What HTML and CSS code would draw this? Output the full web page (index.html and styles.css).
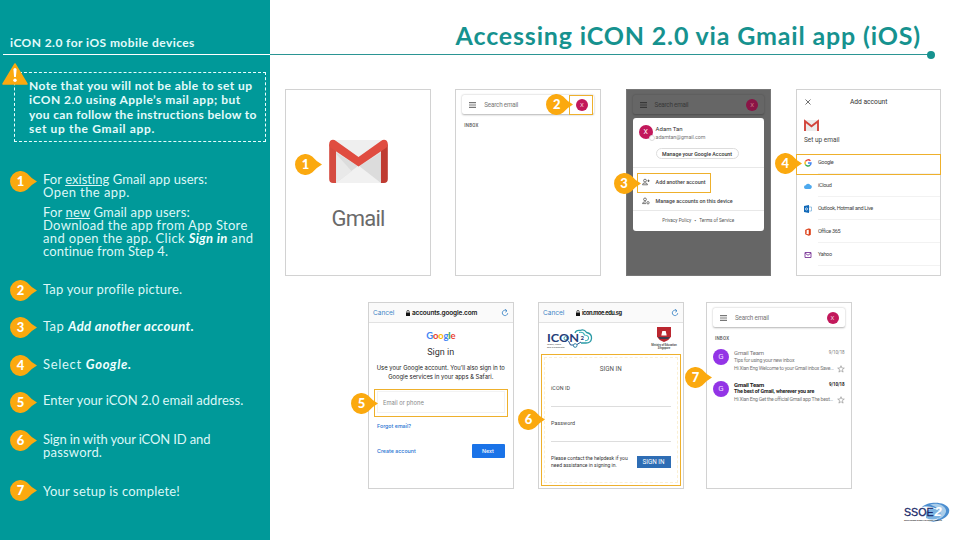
FILE: index.html
```html
<!DOCTYPE html>
<html lang="en">
<head>
<meta charset="utf-8">
<title>Accessing iCON 2.0 via Gmail app (iOS)</title>
<link rel="stylesheet" href="styles.css">
</head>
<body>
<svg class="defs" width="0" height="0">
  <symbol id="pin" viewBox="0 0 27 21"><path d="M17.200 2.400Q21.500 7.500 27 10.500Q21.500 13.500 17.200 18.600A10.500 10.500 0 1 1 17.200 2.400Z" fill="#fba90f"/></symbol>
  <symbol id="menu" viewBox="0 0 7 6"><path d="M0 .7h7M0 3h7M0 5.300h7" stroke="currentColor" stroke-width="1.200"/></symbol>
  <symbol id="reload" viewBox="0 0 8 8"><path d="M5.600 1.700A2.700 2.700 0 1 0 6.700 4.200M4.200 .3L6 1.800L4.300 3.200" fill="none" stroke="#3d86c6" stroke-width=".9"/></symbol>
  <symbol id="lock" viewBox="0 0 4 6"><path d="M0 2.600h4V6H0z" fill="#111"/><path d="M.9 2.800V1.500a1.100 1.100 0 0 1 2.200 0v1.300" fill="none" stroke="#111" stroke-width=".7"/></symbol>
  <symbol id="star" viewBox="0 0 8 8"><path d="M4 .7l.9 2.300 2.400.1-1.900 1.500.7 2.500L4 5.700 1.900 7.100l.7-2.500L.7 3.100l2.400-.1z" fill="none" stroke="#888" stroke-width=".6"/></symbol>
</svg>

<div class="slide">
  <aside class="sidebar">
    <h2>iCON 2.0 for iOS mobile devices</h2>
    <div class="note">
      <svg class="warn" viewBox="0 0 26 22"><path d="M13 1L25 21H1Z" fill="#fba90f" stroke="#fba90f" stroke-width="1.500" stroke-linejoin="round"/><path d="M11.400 6.500a1.600 1.600 0 0 1 3.200 0L13.900 14h-1.800z" fill="#fff"/><circle cx="13" cy="17.300" r="1.700" fill="#fff"/></svg>
      <span class="n1">Note that you will not be able to set up</span>
      <span class="n2">iCON 2.0 using Apple’s mail app; but</span>
      <span class="n3">you can follow the instructions below to</span>
      <span class="n4">set up the Gmail app.</span>
    </div>
    <ol class="steps">
      <li><div class="pin"><svg><use href="#pin"/></svg><b>1</b></div>
        <div class="txt"><p><span class="s1">For <u>existing</u> Gmail app users:</span><span class="s2">Open the app.</span></p>
        <p><span class="s3">For <u>new</u> Gmail app users:</span><span class="s4">Download the app from App Store</span><span class="s5">and open the app. Click <em>Sign in</em> and</span><span class="s6">continue from Step 4.</span></p></div></li>
      <li><div class="pin"><svg><use href="#pin"/></svg><b>2</b></div><div class="txt mid"><span class="s7">Tap your profile picture.</span></div></li>
      <li><div class="pin"><svg><use href="#pin"/></svg><b>3</b></div><div class="txt mid"><span class="s8">Tap <em>Add another account.</em></span></div></li>
      <li><div class="pin"><svg><use href="#pin"/></svg><b>4</b></div><div class="txt mid"><span class="s9">Select <em>Google.</em></span></div></li>
      <li><div class="pin"><svg><use href="#pin"/></svg><b>5</b></div><div class="txt"><span class="s10">Enter your iCON 2.0 email address.</span></div></li>
      <li><div class="pin"><svg><use href="#pin"/></svg><b>6</b></div><div class="txt mid"><span class="s11">Sign in with your iCON ID and</span><span class="s12">password.</span></div></li>
      <li><div class="pin"><svg><use href="#pin"/></svg><b>7</b></div><div class="txt low"><span class="s13">Your setup is complete!</span></div></li>
    </ol>
  </aside>

  <main class="main">
    <header><h1>Accessing iCON 2.0 via Gmail app (iOS)</h1></header>

    <section class="row top">
      <article class="phone splash">
        <svg class="gmail" viewBox="0 0 60 44">
          <path d="M3 0h54v44H3z" fill="#e6e6e6"/><path d="M7 44V13l23 14 23-14v31z" fill="#dcdcdc"/><path d="M7 44l23-18 23 18z" fill="#f1f1f1"/><path d="M7 14l16 18L7 44z" fill="#e9e9e9"/><path d="M5 0h50L30 18z" fill="#efefef"/>
          <path d="M0 4v36q0 4 4 4h3V11z" fill="#d54b40"/><path d="M60 4v36q0 4-4 4h-3V11z" fill="#bf3b31"/>
          <path d="M0 4C0 0 4-1.500 7 1L30 17.500 53 1c3-2.500 7-1 7 3 0 2-.6 3.200-2 4.300L30 27 2 8.300C.6 7.200 0 6 0 4z" fill="#e04c40"/>
        </svg>
        <div class="brand">Gmail</div>
        <div class="pin over p1"><svg><use href="#pin"/></svg><b>1</b></div>
      </article>

      <article class="phone">
        <div class="search"><svg class="menu"><use href="#menu"/></svg><span class="grow">Search email</span><i class="user">X</i></div>
        <div class="inbox">INBOX</div>
        <div class="hl h2"></div>
        <div class="pin over p2"><svg><use href="#pin"/></svg><b>2</b></div>
      </article>

      <article class="phone dim">
        <div class="search"><svg class="menu"><use href="#menu"/></svg><span class="grow">Search email</span><i class="user">X</i></div>
        <div class="card">
          <div class="who"><i class="user big">X</i><div><div class="name">Adam Tan</div><div class="mail">adamtan@gmail.com</div><div class="manage">Manage your Google Account</div></div></div>
          <div class="acts">
            <div class="act"><svg viewBox="0 0 8 8"><circle cx="3" cy="2.600" r="1.400"/><path d="M.5 6.800Q.5 4.900 3 4.900T5.500 6.800ZM5.300 2.800h2.400M6.500 1.600V4"/></svg><span>Add another account</span></div>
            <div class="act"><svg viewBox="0 0 8 8"><circle cx="3" cy="2.400" r="1.400"/><path d="M4 4.800Q.5 4.500.5 6.600H4"/><circle cx="6" cy="5.800" r="1.200"/></svg><span>Manage accounts on this device</span></div>
          </div>
          <div class="legal"><span>Privacy Policy</span><span class="dot">•</span><span>Terms of Service</span></div>
        </div>
        <div class="hl h3"></div>
        <div class="pin over p3"><svg><use href="#pin"/></svg><b>3</b></div>
      </article>

      <article class="phone add">
        <div class="bar"><svg viewBox="0 0 6 6"><path d="M.5.5l5 5M5.500.5l-5 5" stroke="#333" stroke-width=".7"/></svg><span>Add account</span></div>
        <svg class="mini" viewBox="0 0 15 11"><path d="M1 0h13v11H1z" fill="#ececec"/><path d="M1 11V1.200l6.500 5 6.500-5V11" fill="none" stroke="#d2443b" stroke-width="1.900"/></svg>
        <div class="setup">Set up email</div>
        <ul class="provs">
          <li><svg viewBox="0 0 8 8"><path d="M6.400 1.900A3 3 0 0 0 1.400 2.500" stroke="#ea4335"/><path d="M1.400 2.500A3 3 0 0 0 1.400 5.500" stroke="#fbbc05"/><path d="M1.400 5.500A3 3 0 0 0 6 6.200" stroke="#34a853"/><path d="M6 6.200Q7 5.300 7 4H4" stroke="#4285f4"/></svg><span>Google</span></li>
          <li><svg viewBox="0 0 8 8"><path d="M1.900 6.900a1.800 1.800 0 0 1-.2-3.600A2.500 2.500 0 0 1 6.200 3a2 2 0 0 1 .2 3.900z" fill="#4da9ee"/></svg><span>iCloud</span></li>
          <li><svg viewBox="0 0 8 8"><path d="M4.500 2h3v4h-3z" fill="#fff" stroke="#5b9fd4" stroke-width=".6"/><path d="M0 1l5-1v8L0 7z" fill="#1169b8"/><circle cx="2.500" cy="4" r="1.100" fill="none" stroke="#fff" stroke-width=".7"/></svg><span>Outlook, Hotmail and Live</span></li>
          <li><svg viewBox="0 0 8 8"><path d="M1.500 6V2l3.300-1.300L6.500 1.300v5.400L4.800 7.400 1.500 6.100l3.200.3V1.700L2.700 2.200v3.300" fill="#dc3e15" stroke="#dc3e15" stroke-width=".6"/><path d="M2.700 2.300l1.900-.5v4.500l-1.900-.6z" fill="#fff"/></svg><span>Office 365</span></li>
          <li><svg viewBox="0 0 8 8"><path d="M1 1.500h6v5H1zM1 2l3 2.300L7 2" fill="none" stroke="#7b3697" stroke-width=".9"/></svg><span>Yahoo</span></li>
        </ul>
        <div class="hl h4"></div>
        <div class="pin over p4"><svg><use href="#pin"/></svg><b>4</b></div>
      </article>
    </section>

    <section class="row bottom">
      <article class="phone google">
        <div class="url"><span class="cancel">Cancel</span><svg class="lock"><use href="#lock"/></svg><b class="grow u1">accounts.google.com</b><svg class="reload"><use href="#reload"/></svg></div>
        <div class="glogo"><span class="cb">G</span><span class="cr">o</span><span class="cy">o</span><span class="cb">g</span><span class="cg">l</span><span class="cr">e</span></div>
        <div class="signin">Sign in</div>
        <div class="lead"><span>Use your Google account. You’ll also sign in to</span><span>Google services in your apps &amp; Safari.</span></div>
        <div class="field">Email or phone</div>
        <div class="forgot">Forgot email?</div>
        <div class="foot"><span>Create account</span><span class="next">Next</span></div>
        <div class="hl h5"></div>
        <div class="pin over p5"><svg><use href="#pin"/></svg><b>5</b></div>
      </article>

      <article class="phone icon">
        <div class="url"><span class="cancel">Cancel</span><svg class="lock"><use href="#lock"/></svg><b class="grow u2">icon.moe.edu.sg</b><svg class="reload"><use href="#reload"/></svg></div>
        <div class="logos">
          <svg class="ilogo" viewBox="0 0 46 19"><g fill="none"><path d="M28 4Q29 1 33 1.500Q37-.5 39.500 3.500Q45 4.500 44.500 9.500Q44 14 39 14H34" stroke="#2a9aa6" stroke-width="1.300"/><path d="M32 3.500Q36.500 2.500 37.500 6Q42 6.500 41.500 9.500Q41 11.800 38 11.800" stroke="#3db2b8" stroke-width="1.100"/><path d="M21.500 12l2 4h3M30 15.500l4-2.500" stroke="#27508e" stroke-width="1"/><circle cx="28.200" cy="16.500" r="1.800" stroke="#2a7fa6" stroke-width="1"/><circle cx="18.600" cy="9.200" r="1.600" stroke="#2a9aa6" stroke-width=".9"/></g><text x="0" y="13.200" class="iname" textLength="32" lengthAdjust="spacingAndGlyphs">ICON</text><text x="33.500" y="11" class="itwo">2</text><text x="0" y="16.300" class="itag">Teach, Learn</text><text x="0" y="19" class="itag">and Collaborate</text></svg>
          <div class="moe"><svg viewBox="0 0 14 15"><path d="M0 0h14v9.500Q12 13.500 7 15Q2 13.500 0 9.500Z" fill="#bb2730"/><path d="M4.300 8.500L5.300 4h3.400l1 4.500z" fill="#fff"/><path d="M1 10h12l-2 2H3z" fill="#3d3b4f"/></svg><span>Ministry of Education</span><span>Singapore</span></div>
        </div>
        <div class="form">
          <div class="ftitle">SIGN IN</div>
          <div class="inp i1">iCON ID</div>
          <div class="inp i2">Password</div>
          <div class="ffoot"><div><span>Please contact the helpdesk if you</span><span>need assistance in signing in.</span></div><span class="btn">SIGN IN</span></div>
        </div>
        <div class="pin over p6"><svg><use href="#pin"/></svg><b>6</b></div>
      </article>

      <article class="phone last">
        <div class="search"><svg class="menu"><use href="#menu"/></svg><span class="grow">Search email</span><i class="user">X</i></div>
        <div class="inbox">INBOX</div>
        <div class="msg"><i class="g">G</i><div class="body"><div class="line"><span class="from">Gmail Team</span><span class="date">9/10/18</span></div><div class="m1">Tips for using your new inbox</div><div class="line"><span class="m2">Hi Xian Eng Welcome to your Gmail inbox Save...</span><svg class="star"><use href="#star"/></svg></div></div></div>
        <div class="msg unread"><i class="g">G</i><div class="body"><div class="line"><span class="from">Gmail Team</span><span class="date">9/10/18</span></div><div class="m1">The best of Gmail, wherever you are</div><div class="line"><span class="m2">Hi Xian Eng Get the official Gmail app The best...</span><svg class="star"><use href="#star"/></svg></div></div></div>
        <div class="pin over p7"><svg><use href="#pin"/></svg><b>7</b></div>
      </article>
    </section>

    <footer>
      <svg viewBox="0 0 46 24"><path d="M18 5C24-1 42-1 45 7C47 14 37 20.500 24 20C34 19 39 14 36 9.500C33 5.500 25 3.500 18 5Z" fill="#4c8ed0"/><path d="M26 2.500C34 0 43 4 42 10Q40 16 33 17.500Q39 13 35 8Q31 4 26 2.500Z" fill="#a9cdea"/><path d="M22 10q5-6 12-2q6 4 1 8q-7 3-13 0z" fill="#7cb3e0"/><text x="0" y="13.500" class="ss" textLength="29.500" lengthAdjust="spacingAndGlyphs">SSOE</text><text x="30.500" y="13.500" class="two">2</text><text x="0" y="19.300" class="tag" textLength="38">SUPPORTING EVERY LEARNER, ALWAYS</text></svg>
    </footer>
  </main>
</div>
</body>
</html>
```
FILE: styles.css
```css
* { box-sizing: border-box; margin: 0; padding: 0; }
body { width: 960px; height: 540px; overflow: hidden; background: #fff; font-variant-ligatures: none; }
.defs { position: absolute; }
.slide { display: flex; width: 960px; height: 540px; font-family: "Century Gothic", "URW Gothic", Lato, sans-serif; }
svg { display: block; flex: none; overflow: visible; }
span { white-space: nowrap; }
.grow { flex: 1; }

/* sidebar */
.sidebar { width: 270px; background: #009999; color: #fff; }
.sidebar h2 { height: 55px; margin-left: 3px; padding: 35px 0 0 7px; border-bottom: 1px solid #fff; font-size: 12px; line-height: 16px; font-weight: 700; color: #e4fbfb; white-space: nowrap; letter-spacing: .43px; }
.note { position: relative; width: 252px; height: 70px; margin: 17px 0 0 14px; padding: 6px 0 0 14px; border: 1px dashed #e8ffff; font-size: 12px; line-height: 14.4px; font-weight: 700; color: #e4fbfb; }
.note span { display: block; }
.n1 { letter-spacing: .41px; }
.n2 { letter-spacing: .5px; }
.n3 { letter-spacing: .36px; }
.n4 { letter-spacing: .65px; }
.warn { position: absolute; left: -13px; top: -10px; width: 26px; height: 22px; }
.steps { list-style: none; display: grid; grid-template-rows: 108.5px 37.5px 37.5px 37.5px 37.5px 50.500px 22px; margin: 29px 0 0 10px; font-size: 13px; line-height: 13px; color: #dcf7f7; }
.steps li { display: flex; gap: 6px; }
.txt { padding-top: 1.500px; }
.txt.mid { padding-top: 3px; }
.txt.low { padding-top: 4.500px; }
.txt p + p { margin-top: 7px; }
.txt span { display: block; }
.txt em { font-weight: 700; color: #f0ffff; }
.s1 { letter-spacing: .05px; }
.s2 { letter-spacing: .42px; }
.s3 { letter-spacing: .16px; }
.s4 { letter-spacing: .3px; }
.s5 { letter-spacing: .36px; }
.s6 { letter-spacing: .1px; }
.s7 { letter-spacing: .18px; }
.s8 { letter-spacing: .42px; }
.s9 { letter-spacing: .68px; }
.s10 { letter-spacing: .03px; }
.s11 { letter-spacing: -.13px; }
.s12 { letter-spacing: .2px; }
.s13 { letter-spacing: .2px; }
.pin { position: relative; flex: none; width: 27px; height: 21px; }
.pin svg { width: 27px; height: 21px; }
.pin b { position: absolute; left: 0; top: 0; width: 21px; text-align: center; color: #fff; font-size: 13px; line-height: 21px; font-weight: 900; font-family: "Century Gothic", "URW Gothic", Lato, sans-serif; }
.pin.over { position: absolute; z-index: 3; }

/* main */
.main { flex: 1; display: flex; flex-direction: column; }
header { position: relative; width: 661px; height: 55px; padding: 18.500px 10px 0 0; border-bottom: 1px solid #2b9594; text-align: right; }
header::after { content: ""; position: absolute; right: -4px; bottom: -5px; width: 8px; height: 8px; border-radius: 50%; background: #16928f; }
h1 { font-size: 25px; line-height: 32px; font-weight: 700; color: #16928f; white-space: nowrap; letter-spacing: .84px; }
.row { display: flex; height: 187px; }
.top { margin: 34px 0 0 15px; gap: 24.800px; }
.bottom { margin: 26px 0 0 98px; gap: 24.500px; }
.phone { position: relative; flex: none; width: 145.500px; height: 187px; border: 1px solid #d2d2d2; background: #fff; font-family: Roboto, "Liberation Sans", sans-serif; font-size: 6px; line-height: 8px; color: #555; }
.last { margin-left: -2px; }
.hl { position: absolute; border: 1.500px solid #eeb02c; z-index: 2; }

.gmail { width: 59px; height: 43px; margin: 50px 0 0 43px; }
.brand { margin-top: 23px; padding-left: 45.500px; font-size: 22px; line-height: 26px; letter-spacing: -.75px; color: #6a6a6a; }
.p1 { left: 9px; top: 64px; }

.search { display: flex; align-items: center; height: 19px; margin: 5px 6px 0; padding: 0 6px 0 7px; border-radius: 2px; box-shadow: 0 .5px 2px rgba(0,0,0,.3); font-size: 6.300px; letter-spacing: -.2px; color: #777; }
.menu { width: 7px; height: 6px; margin-right: 8px; }
.user { display: block; flex: none; width: 12px; height: 12px; border-radius: 50%; background: #c2185b; color: #f3c9da; font-style: normal; font-size: 6px; line-height: 12px; text-align: center; letter-spacing: 0; }
.inbox { margin: 8px 0 0 8px; font-size: 4.500px; line-height: 7px; font-weight: 500; letter-spacing: .2px; }
.h2 { left: 113px; top: 5px; width: 24px; height: 20px; }
.p2 { left: 90px; top: 4px; }

.dim { background: #666; border-color: #777; }
.dim .search { background: #666; color: #383838; box-shadow: 0 .5px 2px rgba(0,0,0,.25); }
.dim .search .user { background: #8a1446; color: #c78; }
.card { height: 113px; margin: 4px 6px 0; border-radius: 3px; background: #fff; }
.who { display: flex; height: 50px; padding: 7px 0 0 6px; border-bottom: 1px solid #e8e8e8; gap: 3px; }
.user.big { position: relative; width: 14px; height: 14px; line-height: 14px; font-size: 7px; color: #fff; }
.user.big::after { content: ""; position: absolute; right: -2px; bottom: -2px; width: 4px; height: 4px; border: .5px solid #ddd; border-radius: 50%; background: #fff; }
.name { color: #333; font-size: 6px; }
.mail { font-size: 5.300px; color: #777; letter-spacing: -.05px; }
.manage { width: 83px; height: 11px; margin-top: 7px; border: .5px solid #ddd; border-radius: 6px; text-align: center; font-size: 5.300px; line-height: 10px; font-weight: 500; color: #333; white-space: nowrap; }
.acts { height: 43px; padding-top: 5px; border-bottom: 1px solid #e8e8e8; }
.act { display: flex; align-items: center; gap: 6px; height: 18.500px; padding-left: 9px; font-weight: 500; font-size: 5.350px; color: #444; }
.act svg { width: 8px; height: 8px; fill: none; stroke: #444; stroke-width: .7; }
.legal { display: flex; justify-content: center; gap: 3px; padding-top: 6px; font-size: 4.700px; line-height: 7px; }
.dot { font-size: 6px; }
.h3 { left: 10px; top: 83px; width: 74px; height: 20px; }
.p3 { left: -13px; top: 83px; }

.bar { display: flex; align-items: center; height: 24px; padding-left: 8px; color: #333; font-size: 6.700px; }
.bar svg { width: 6px; height: 6px; margin-right: 39px; }
.mini { width: 15px; height: 11px; margin: 6px 0 0 7px; }
.setup { margin: 5px 0 0 7px; font-size: 6.500px; color: #444; }
.provs { list-style: none; margin-top: 7px; }
.provs li { display: flex; align-items: center; gap: 6px; height: 23px; margin-left: 7px; font-size: 5.500px; letter-spacing: -.3px; color: #444; }
.provs svg { width: 8px; height: 8px; }
.provs li:first-child svg { fill: none; stroke-width: 1.400; }
.provs span { flex: 1; height: 23px; line-height: 23px; border-bottom: 1px solid #f2f2f2; }
.h4 { left: -1px; top: 64px; width: 145.500px; height: 21px; }
.p4 { left: -22px; top: 63px; }

.url { display: flex; align-items: center; height: 20px; padding: 0 4px; border-bottom: 1px solid #e2e2e2; background: #fafafa; font-family: Inter, sans-serif; font-size: 6.500px; color: #222; }
.u1 { letter-spacing: -.17px; font-weight: 600; }
.u2 { font-size: 5.700px; letter-spacing: -.5px; }
.cancel { width: 33px; color: #3d86c6; }
.lock { width: 4px; height: 6px; margin-right: 2px; }
.reload { width: 8px; height: 8px; }
.google { font-family: Inter, "Liberation Sans", sans-serif; }
.glogo { margin-top: 7px; text-align: center; font-size: 9.500px; line-height: 12px; font-family: Lato, sans-serif; font-weight: 700; letter-spacing: -.2px; }
.cb { color: #4285f4; } .cr { color: #ea4335; } .cy { color: #fbbc05; } .cg { color: #34a853; }
.signin { margin-top: 4px; text-align: center; font-size: 9px; line-height: 12px; font-family: Roboto, sans-serif; color: #333; }
.lead { margin-top: 5px; line-height: 9px; font-size: 5.850px; color: #222; text-align: center; }
.lead span { display: block; }
.field { height: 22px; margin: 10px 8px 0; padding-left: 5px; border: .5px solid #f3f3f3; font-size: 5.800px; line-height: 21px; color: #888; }
.forgot { margin: 9px 0 0 8px; font-size: 5.300px; color: #2672d2; font-weight: 500; }
.foot { display: flex; justify-content: space-between; align-items: center; margin: 14px 8px 0; font-size: 5.300px; font-weight: 500; color: #2672d2; }
.next { width: 33px; height: 14px; border-radius: 1px; background: #1a73e8; color: #fff; text-align: center; line-height: 14px; }
.h5 { left: 5px; top: 86px; width: 134px; height: 28px; }
.p5 { left: -18px; top: 90px; }

.logos { display: flex; justify-content: space-between; height: 32px; padding: 6px 5px 0 8px; }
.ilogo { width: 46px; height: 19px; }
.iname { font: 700 11.500px Lato, sans-serif; fill: #243d78; }
.itwo { font: 700 6px Lato, sans-serif; fill: #243d78; }
.itag { font: 2.500px Roboto, sans-serif; fill: #444; }
.moe { width: 27px; margin-top: -2px; font-size: 2.700px; line-height: 3px; font-weight: 700; text-align: center; }
.moe svg { width: 14px; height: 15px; margin: 0 auto 1.500px; }
.moe span { display: block; }
.form { position: relative; height: 132px; margin: -1px 2px 0; padding: 10px 9px 0 9px; border: 1.500px solid #eeb02c; outline: 1.500px dashed #fbf0d4; outline-offset: -4px; }
.ftitle { text-align: center; font-size: 6.300px; }
.inp { border-bottom: 1px solid #ddd; font-size: 5.400px; color: #444; letter-spacing: .05px; }
.i1 { margin-top: 11px; height: 23px; }
.i2 { margin-top: 12px; height: 23px; }
.ffoot { display: flex; justify-content: space-between; align-items: center; margin-top: 13px; font-size: 5.050px; line-height: 7px; color: #333; }
.ffoot div span { display: block; }
.btn { width: 34px; height: 12px; background: #2e6db4; color: #fff; text-align: center; font-size: 6.300px; line-height: 12px; }
.p6 { left: -21px; top: 106px; }

.msg { display: flex; gap: 5px; height: 31.500px; margin: 0 6px; padding-top: 7px; color: #777; font-size: 5.200px; line-height: 7.800px; letter-spacing: -.25px; }
.msg .g { flex: none; width: 16px; height: 16px; border-radius: 50%; background: #9334e6; color: #eedcff; font-style: normal; font-size: 8px; line-height: 16px; text-align: center; letter-spacing: 0; }
.body { flex: 1; min-width: 0; }
.line { display: flex; justify-content: space-between; }
.from { font-size: 6px; letter-spacing: -.2px; }
.date { font-size: 4.500px; letter-spacing: -.1px; }
.m1, .m2 { white-space: nowrap; }
.star { width: 8px; height: 8px; }
.unread .from, .unread .date, .unread .m1 { font-weight: 700; color: #222; }
.unread .m1 { font-size: 5.300px; letter-spacing: -.15px; }
.p7 { left: -22px; top: 64px; }

footer { align-self: flex-end; margin: 13px 10px 0 0; }
footer svg { width: 46px; height: 24px; }
.ss { font: 11px "Liberation Sans", sans-serif; fill: #1b2a69; stroke: #1b2a69; stroke-width: .3; }
.two { font: italic 700 13px "Liberation Sans", sans-serif; fill: #fff; }
.tag { font: 700 2.300px "Liberation Sans", sans-serif; fill: #333; }
```
